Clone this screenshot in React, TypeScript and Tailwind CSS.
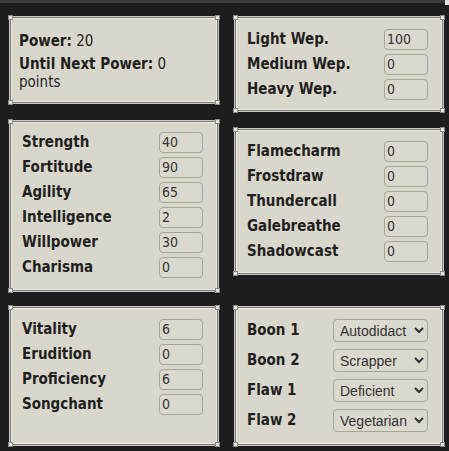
import type { ReactNode } from "react";

const labelFont =
  "font-['DejaVu_Sans_Condensed','DejaVu_Sans',sans-serif] font-stretch-condensed";

const Panel = ({ children, className }: { children: ReactNode; className?: string }) => {
  return (
    <div
      className={`relative border border-[#c6c6c1] bg-[#d9d7cb] shadow-[inset_0_0_0_1px_#7b7b77,inset_0_0_0_2px_#ebeae2] ${className ?? ""}`}
    >
      <span className="absolute -left-[2px] -top-[2px] size-[5px] border border-[#8a8a86] bg-[#e4e4e0]" />
      <span className="absolute -right-[2px] -top-[2px] size-[5px] border border-[#8a8a86] bg-[#e4e4e0]" />
      <span className="absolute -left-[2px] -bottom-[2px] size-[5px] border border-[#8a8a86] bg-[#e4e4e0]" />
      <span className="absolute -right-[2px] -bottom-[2px] size-[5px] border border-[#8a8a86] bg-[#e4e4e0]" />
      {children}
    </div>
  );
};

const StatRow = ({ label, value }: { label: string; value: string }) => {
  return (
    <div className="flex h-[21px] items-center justify-between">
      <span className={`${labelFont} text-[15px] font-bold text-[#1f1f1f]`}>{label}</span>
      <input
        type="text"
        defaultValue={value}
        className={`${labelFont} h-[21px] w-[44px] rounded-[4px] border border-[#a6a597] bg-[#dbd9ce] pl-[2px] text-[14px] text-[#333] outline-none`}
      />
    </div>
  );
};

const PickRow = ({ label, value, options }: { label: string; value: string; options: string[] }) => {
  return (
    <div className="flex h-[23px] items-center justify-between">
      <span className={`${labelFont} text-[15px] font-bold text-[#1f1f1f]`}>{label}</span>
      <select
        defaultValue={value}
        className="h-[23px] w-[95px] rounded-[4px] border border-[#a6a597] bg-[#dbd9ce] pl-[2px] font-['Liberation_Sans',Arial,sans-serif] text-[14px] text-[#333] outline-none"
      >
        {options.map((o) => (
          <option key={o}>{o}</option>
        ))}
      </select>
    </div>
  );
};

const attributes = [
  { label: "Strength", value: "40" },
  { label: "Fortitude", value: "90" },
  { label: "Agility", value: "65" },
  { label: "Intelligence", value: "2" },
  { label: "Willpower", value: "30" },
  { label: "Charisma", value: "0" },
];

const weapons = [
  { label: "Light Wep.", value: "100" },
  { label: "Medium Wep.", value: "0" },
  { label: "Heavy Wep.", value: "0" },
];

const magic = [
  { label: "Flamecharm", value: "0" },
  { label: "Frostdraw", value: "0" },
  { label: "Thundercall", value: "0" },
  { label: "Galebreathe", value: "0" },
  { label: "Shadowcast", value: "0" },
];

const talents = [
  { label: "Vitality", value: "6" },
  { label: "Erudition", value: "0" },
  { label: "Proficiency", value: "6" },
  { label: "Songchant", value: "0" },
];

const boons = ["Autodidact", "Scrapper", "Steadfast", "Packmule"];
const flaws = ["Deficient", "Vegetarian", "Glass Bones", "Blind"];

export default function App() {
  return (
    <div className="min-h-screen bg-[#1d1d1d]">
      <div className="flex h-[3px] justify-end bg-[#3b3b3b]">
        <div className="h-[5px] w-[4px] bg-[#e0e0e0]" />
      </div>
      <div className="grid grid-cols-[210px_210px] gap-x-[15px] gap-y-[14px] pl-[9px] pt-[13px]">
        <div className="flex flex-col gap-[16px]">
          <Panel className="pb-[12px] pl-[9px] pr-[9px] pt-[15px]">
            <div className={`${labelFont} text-[15px] leading-[18px] text-[#1f1f1f]`}>
              <p className="mb-[5px]">
                <b>Power:</b> 20
              </p>
              <p>
                <b>Until Next Power:</b> 0 points
              </p>
            </div>
          </Panel>
          <Panel className="pb-[13px] pl-[12px] pr-[15px] pt-[11px]">
            <div className="flex flex-col gap-[4px]">
              {attributes.map((a) => (
                <StatRow key={a.label} {...a} />
              ))}
            </div>
          </Panel>
        </div>

        <div className="flex flex-col gap-[16px]">
          <Panel className="pb-[11px] pl-[12px] pr-[15px] pt-[12px]">
            <div className="flex flex-col gap-[4px]">
              {weapons.map((w) => (
                <StatRow key={w.label} {...w} />
              ))}
            </div>
          </Panel>
          <Panel className="pb-[12px] pl-[12px] pr-[15px] pt-[12px]">
            <div className="flex flex-col gap-[4px]">
              {magic.map((m) => (
                <StatRow key={m.label} {...m} />
              ))}
            </div>
          </Panel>
        </div>

        <Panel className="pb-[12px] pl-[12px] pr-[15px] pt-[12px]">
          <div className="flex flex-col gap-[4px]">
            {talents.map((t) => (
              <StatRow key={t.label} {...t} />
            ))}
          </div>
        </Panel>
        <Panel className="pb-[13px] pl-[12px] pr-[15px] pt-[12px]">
          <div className="flex flex-col gap-[7px]">
            <PickRow label="Boon 1" value="Autodidact" options={boons} />
            <PickRow label="Boon 2" value="Scrapper" options={boons} />
            <PickRow label="Flaw 1" value="Deficient" options={flaws} />
            <PickRow label="Flaw 2" value="Vegetarian" options={flaws} />
          </div>
        </Panel>
      </div>
    </div>
  );
}
